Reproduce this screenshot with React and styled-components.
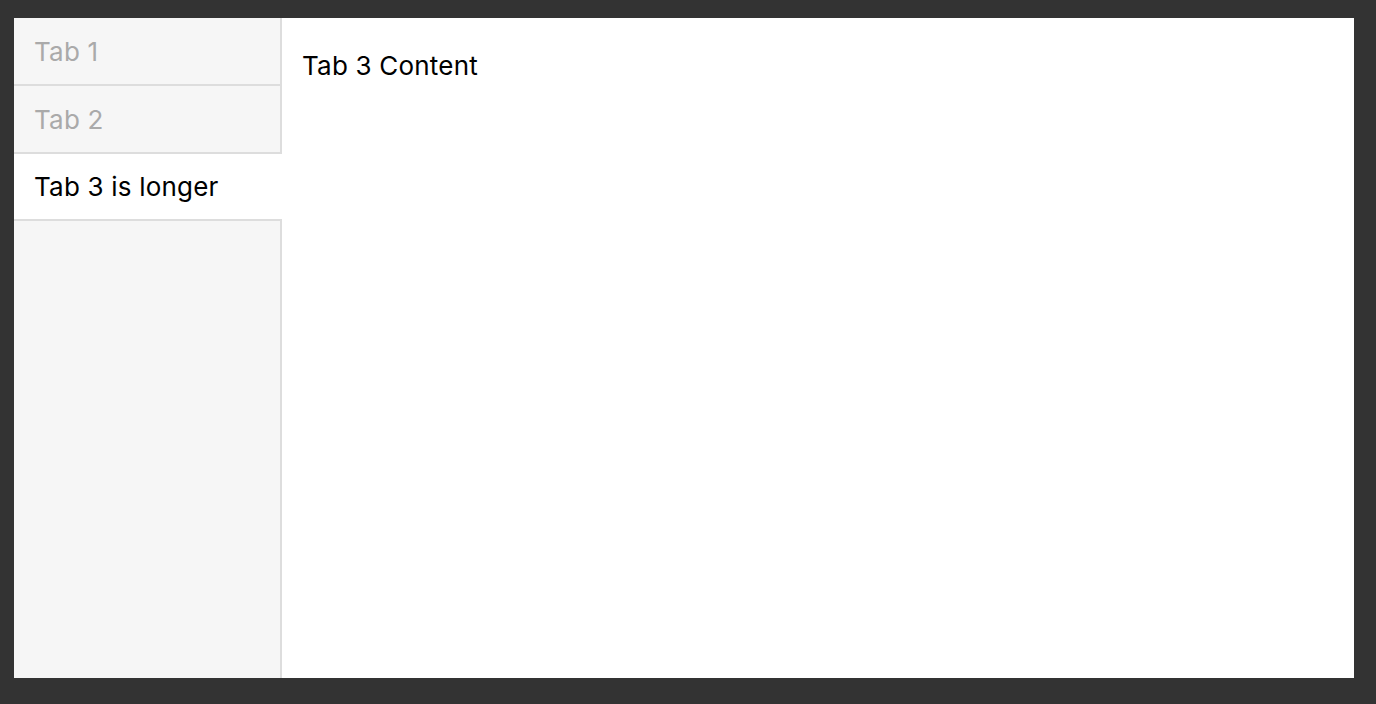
import React, { useState } from 'react';
import styled, { createGlobalStyle } from 'styled-components';

const GlobalStyle = createGlobalStyle`
  html, body {
    margin: 0;
    background: #333333;
  }
  body {
    padding: 18px 0 0 14px;
    font-family: Inter, "Noto Sans", "Liberation Sans", sans-serif;
    letter-spacing: 0.2px;
  }
`;

const Panel = styled.div`
  width: 1340px;
  height: 660px;
  background: #fff;
  display: flex;
`;

const TabList = styled.div`
  width: 268px;
  display: flex;
  flex-direction: column;
  flex-shrink: 0;
`;

const Tab = styled.div`
  box-sizing: border-box;
  padding-left: 20px;
  padding-top: ${(p) => (p.active ? '2px' : '0')};
  display: flex;
  align-items: center;
  font-size: 26px;
  cursor: pointer;
  color: ${(p) => (p.active ? '#000' : '#aaa')};
  background: ${(p) => (p.active ? '#fff' : '#f6f6f6')};
  border-right: 2px solid ${(p) => (p.active ? 'transparent' : '#dddddd')};
  border-bottom: 2px solid ${(p) => (p.active ? 'transparent' : '#dddddd')};
  height: ${(p) => (p.active ? '65px' : '68px')};
`;

const Filler = styled.div`
  flex: 1;
  background: #f6f6f6;
  border-top: 2px solid #dddddd;
  border-right: 2px solid #dddddd;
`;

const Content = styled.div`
  flex: 1;
  padding: 33px 20px;
  font-size: 26px;
  color: #000;
  line-height: 30px;
`;

const tabs = ['Tab 1', 'Tab 2', 'Tab 3 is longer'];
const contents = ['Tab 1 Content', 'Tab 2 Content', 'Tab 3 Content'];

export default function App() {
  const [active, setActive] = useState(2);

  return (
    <>
      <GlobalStyle />
      <Panel>
        <TabList>
          {tabs.map((t, i) => (
            <Tab key={t} active={i === active} onClick={() => setActive(i)}>
              {t}
            </Tab>
          ))}
          <Filler />
        </TabList>
        <Content>{contents[active]}</Content>
      </Panel>
    </>
  );
}
